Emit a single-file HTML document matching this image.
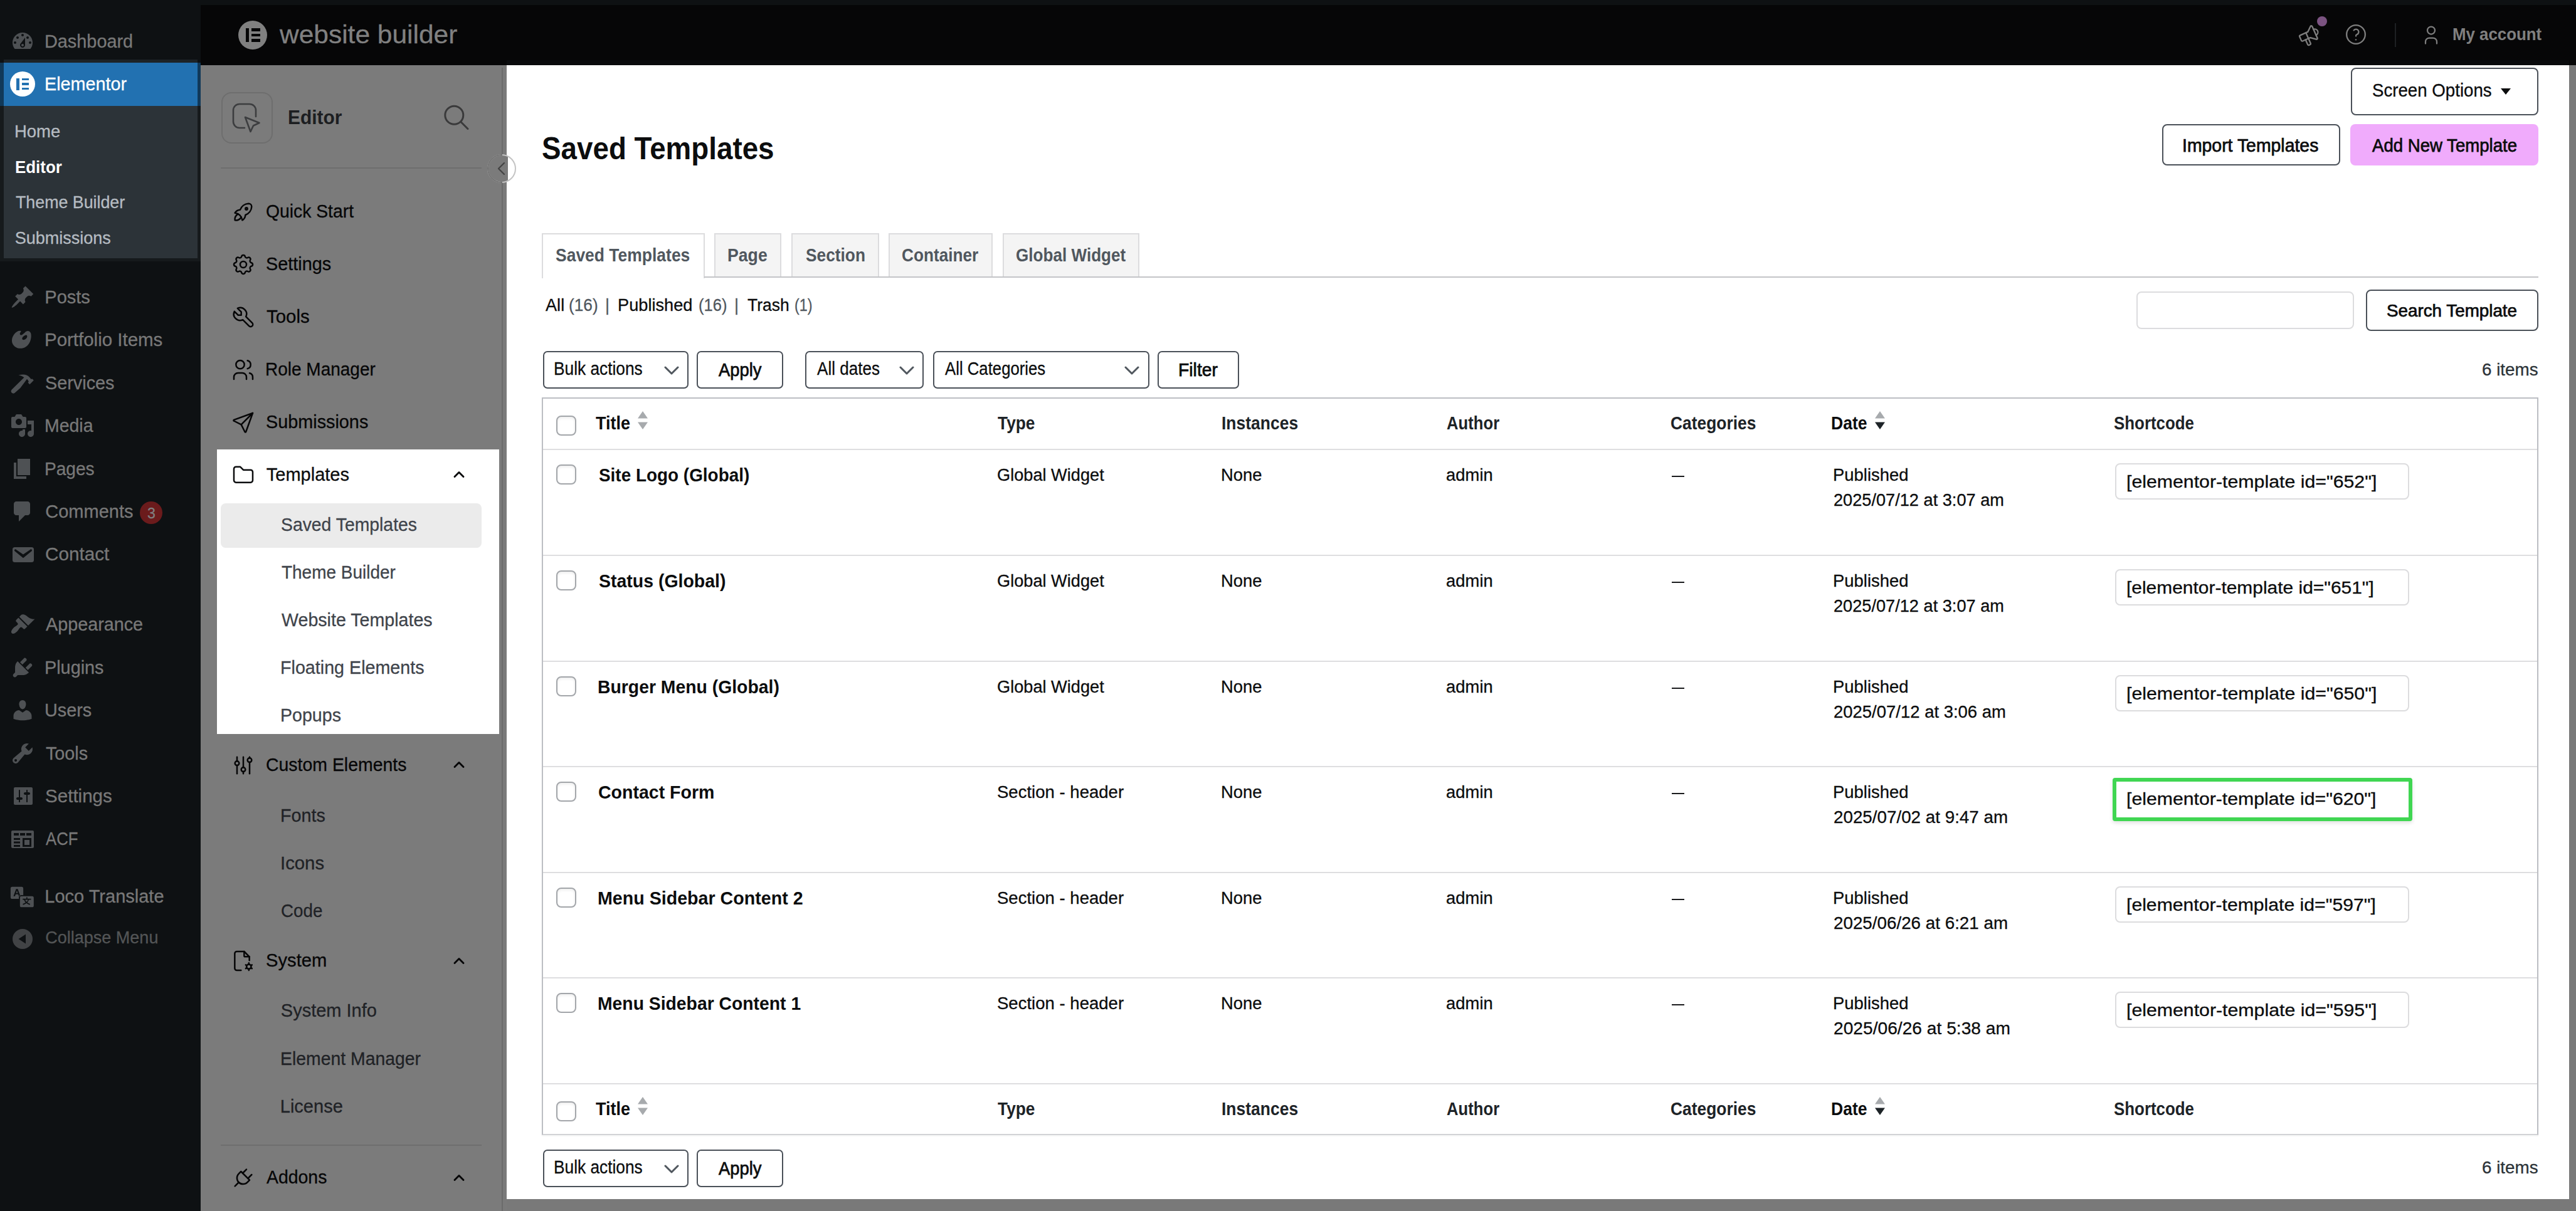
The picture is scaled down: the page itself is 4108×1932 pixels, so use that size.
<!DOCTYPE html>
<html><head><meta charset="utf-8"><title>Saved Templates</title>
<style>
html,body{margin:0;padding:0;}
body{width:4108px;height:1932px;overflow:hidden;position:relative;background:#797979;font-family:"Liberation Sans", sans-serif;}
div,span,svg{position:absolute;box-sizing:border-box;}
span{white-space:pre;-webkit-text-stroke:0.3px currentColor;transform-origin:0 50%;}
span.b{-webkit-text-stroke:0;}
span.m{-webkit-text-stroke:0.75px currentColor;}
</style></head><body>
<div style="left:0px;top:0px;width:4108px;height:1932px;background:#797979;"></div>
<div style="left:0px;top:0px;width:320px;height:1932px;background:#0e1113;"></div>
<div style="left:0px;top:0px;width:4108px;height:8px;background:#0e1113;"></div>
<div style="left:320px;top:8px;width:3788px;height:96px;background:#060607;"></div>
<div style="left:320px;top:104px;width:481px;height:1828px;background:#7b7b7b;"></div>
<div style="left:800px;top:108px;width:2px;height:1824px;background:#6b6b6b;"></div>
<div style="left:802px;top:104px;width:6px;height:1828px;background:#7a7a7a;"></div>
<div style="left:808px;top:104px;width:3289px;height:1808.7px;background:#fff;"></div>
<div style="left:808px;top:96px;width:3289px;height:8px;background:#0a0b0d;"></div>
<div style="left:0px;top:100px;width:320px;height:69px;background:#113959;"></div>
<div style="left:0px;top:169px;width:320px;height:248px;background:#161a1c;"></div>
<div style="left:6px;top:95px;width:309px;height:5px;background:#1d2327;"></div>
<div style="left:6px;top:100px;width:309px;height:69px;background:#2271b1;"></div>
<div style="left:6px;top:169px;width:309px;height:243px;background:#2c3338;"></div>
<div style="left:223.4px;top:799.9px;width:36px;height:36px;background:#6b1b1c;border-radius:18px;"></div>
<div style="left:380px;top:33px;width:46px;height:46px;border-radius:23px;background:#808080;"></div>
<div style="left:391.5px;top:45px;width:5px;height:22px;background:#060607;"></div>
<div style="left:401px;top:45px;width:14px;height:4.6px;background:#060607;"></div>
<div style="left:401px;top:53.7px;width:14px;height:4.6px;background:#060607;"></div>
<div style="left:401px;top:62.4px;width:14px;height:4.6px;background:#060607;"></div>
<div style="left:3819px;top:37px;width:2px;height:38px;background:#1e2023;"></div>
<svg style="left:3662.8px;top:37px;" width="40" height="40" viewBox="0 0 24 24"><g transform="rotate(-24 12 12)" fill="none" stroke="#7e7e7e" stroke-width="1.4" stroke-linecap="round" stroke-linejoin="round"><path d="M18 8a3 3 0 0 1 0 6"/><path d="M10 8v11a1 1 0 0 1 -1 1h-1a1 1 0 0 1 -1 -1v-5"/><path d="M12 8l4.524 -3.77a.9 .9 0 0 1 1.476 .692v12.156a.9 .9 0 0 1 -1.476 .692l-4.524 -3.77h-8a1 1 0 0 1 -1 -1v-4a1 1 0 0 1 1 -1h8"/></g></svg>
<div style="left:3694.8px;top:25.8px;width:16.4px;height:16.4px;border-radius:9px;background:#7b5381;"></div>
<svg style="left:3736.5px;top:35.3px;" width="40" height="40" viewBox="0 0 24 24"><g fill="none" stroke="#7e7e7e" stroke-width="1.4" stroke-linecap="round" stroke-linejoin="round"><circle cx="12" cy="12" r="8.9"/><path d="M12 17l0 .01"/><path d="M12 13.5a1.5 1.5 0 0 1 1 -1.5a2.6 2.6 0 1 0 -3 -4"/></g></svg>
<svg style="left:3859px;top:37.9px;" width="36" height="36" viewBox="0 0 24 24"><g fill="none" stroke="#7e7e7e" stroke-width="1.5" stroke-linecap="round" stroke-linejoin="round"><circle cx="12" cy="7" r="4"/><path d="M6 21v-2a4 4 0 0 1 4 -4h4a4 4 0 0 1 4 4v2"/></g></svg>
<div style="left:353px;top:147px;width:82px;height:82px;border:2px solid #6e6e6e;border-radius:16px;"></div>
<div style="left:352px;top:267px;width:416px;height:2px;background:#6e6e6e;"></div>
<div style="left:345.5px;top:717px;width:450.7px;height:453.5px;background:#fff;"></div>
<div style="left:352px;top:802.5px;width:416px;height:71px;background:#ebebeb;border-radius:8px;"></div>
<div style="left:352px;top:1826px;width:416px;height:2px;background:#6e6e6e;"></div>
<div style="left:3749px;top:108px;width:299px;height:75.5px;background:#fff;border:2px solid #4a5058;border-radius:8px;"></div>
<svg style="left:3988px;top:140.5px;" width="16" height="10" viewBox="0 0 16 10"><path d="M0 0h16l-8 10z" fill="#0c0d0e"/></svg>
<div style="left:3447.5px;top:198px;width:284px;height:65.5px;background:#fff;border:2px solid #4a5058;border-radius:8px;"></div>
<div style="left:3748px;top:198px;width:300px;height:65.5px;background:#f0abfc;border-radius:8px;"></div>
<div style="left:864px;top:372px;width:259.5px;height:71.5px;background:#fff;border:2px solid #dcdcde;border-bottom:none;"></div>
<div style="left:1139.3px;top:372px;width:107.0px;height:70px;background:#f4f4f4;border:2px solid #dcdcde;border-bottom:none;"></div>
<div style="left:1261.9px;top:372px;width:139.69999999999982px;height:70px;background:#f4f4f4;border:2px solid #dcdcde;border-bottom:none;"></div>
<div style="left:1417.2px;top:372px;width:165.89999999999986px;height:70px;background:#f4f4f4;border:2px solid #dcdcde;border-bottom:none;"></div>
<div style="left:1599.4px;top:372px;width:217.5px;height:70px;background:#f4f4f4;border:2px solid #dcdcde;border-bottom:none;"></div>
<div style="left:1122.5px;top:441.3px;width:2925.5px;height:2px;background:#c3c4c7;"></div>
<div style="left:3407.4px;top:465px;width:347px;height:59.5px;background:#fff;border:2px solid #dcdcde;border-radius:8px;"></div>
<div style="left:3773px;top:462px;width:275px;height:65.5px;background:#fff;border:2px solid #4a5058;border-radius:8px;"></div>
<div style="left:866px;top:560.0px;width:232.4000000000001px;height:59.89999999999998px;background:#fff;border:2px solid #4a5058;border-radius:7px;"></div>
<svg style="left:1058.9px;top:582.5px;" width="24" height="16" viewBox="0 0 24 16"><path d="M2 3 L12 13 L22 3" fill="none" stroke="#50575e" stroke-width="3" stroke-linecap="round" stroke-linejoin="round"/></svg>
<div style="left:1111px;top:560.0px;width:137.9000000000001px;height:59.89999999999998px;background:#fff;border:2px solid #4a5058;border-radius:7px;"></div>
<div style="left:866px;top:1834.0px;width:232.4000000000001px;height:59.90000000000009px;background:#fff;border:2px solid #4a5058;border-radius:7px;"></div>
<svg style="left:1058.9px;top:1856.5px;" width="24" height="16" viewBox="0 0 24 16"><path d="M2 3 L12 13 L22 3" fill="none" stroke="#50575e" stroke-width="3" stroke-linecap="round" stroke-linejoin="round"/></svg>
<div style="left:1111px;top:1834.0px;width:137.9000000000001px;height:59.90000000000009px;background:#fff;border:2px solid #4a5058;border-radius:7px;"></div>
<div style="left:1284px;top:560.0px;width:188.5px;height:59.89999999999998px;background:#fff;border:2px solid #4a5058;border-radius:7px;"></div>
<svg style="left:1433.7px;top:582.5px;" width="24" height="16" viewBox="0 0 24 16"><path d="M2 3 L12 13 L22 3" fill="none" stroke="#50575e" stroke-width="3" stroke-linecap="round" stroke-linejoin="round"/></svg>
<div style="left:1488px;top:560.0px;width:345.10000000000014px;height:59.89999999999998px;background:#fff;border:2px solid #4a5058;border-radius:7px;"></div>
<svg style="left:1793.4px;top:582.5px;" width="24" height="16" viewBox="0 0 24 16"><path d="M2 3 L12 13 L22 3" fill="none" stroke="#50575e" stroke-width="3" stroke-linecap="round" stroke-linejoin="round"/></svg>
<div style="left:1846px;top:560.0px;width:130.39999999999986px;height:59.89999999999998px;background:#fff;border:2px solid #4a5058;border-radius:7px;"></div>
<div style="left:864px;top:634px;width:3184px;height:1177px;background:#fff;border:2px solid #bcbec3;border-bottom-color:#d2d3d6;box-shadow:0 2px 2px rgba(0,0,0,.04);"></div>
<div style="left:866px;top:716px;width:3180px;height:2px;background:#dedee0;"></div>
<div style="left:866px;top:885px;width:3180px;height:2px;background:#dedee0;"></div>
<div style="left:866px;top:1054px;width:3180px;height:2px;background:#dedee0;"></div>
<div style="left:866px;top:1222px;width:3180px;height:2px;background:#dedee0;"></div>
<div style="left:866px;top:1391px;width:3180px;height:2px;background:#dedee0;"></div>
<div style="left:866px;top:1559px;width:3180px;height:2px;background:#dedee0;"></div>
<div style="left:866px;top:1728px;width:3180px;height:2px;background:#dedee0;"></div>
<div style="left:887.2px;top:663.2px;width:31.5px;height:31.5px;background:#fff;border:2px solid #a3a6aa;border-radius:8px;box-shadow:inset 0 2px 4px rgba(0,0,0,.08);"></div>
<svg style="left:1017.0999999999999px;top:656.4px;" width="16" height="30" viewBox="0 0 16 30"><path d="M8 0 L16 11.5 L0 11.5 Z" fill="#a7aaad"/><path d="M0 17.5 L16 17.5 L8 29 Z" fill="#a7aaad"/></svg>
<svg style="left:2990.1px;top:656.4px;" width="16" height="30" viewBox="0 0 16 30"><path d="M8 0 L16 11.5 L0 11.5 Z" fill="#a7aaad"/><path d="M0 17.5 L16 17.5 L8 29 Z" fill="#1d2327"/></svg>
<div style="left:887.2px;top:1757.3px;width:31.5px;height:31.5px;background:#fff;border:2px solid #a3a6aa;border-radius:8px;box-shadow:inset 0 2px 4px rgba(0,0,0,.08);"></div>
<svg style="left:1017.0999999999999px;top:1750.3px;" width="16" height="30" viewBox="0 0 16 30"><path d="M8 0 L16 11.5 L0 11.5 Z" fill="#a7aaad"/><path d="M0 17.5 L16 17.5 L8 29 Z" fill="#a7aaad"/></svg>
<svg style="left:2990.1px;top:1750.3px;" width="16" height="30" viewBox="0 0 16 30"><path d="M8 0 L16 11.5 L0 11.5 Z" fill="#a7aaad"/><path d="M0 17.5 L16 17.5 L8 29 Z" fill="#1d2327"/></svg>
<div style="left:887.2px;top:741.3px;width:31.5px;height:31.5px;background:#fff;border:2px solid #a3a6aa;border-radius:8px;box-shadow:inset 0 2px 4px rgba(0,0,0,.08);"></div>
<div style="left:2665.5px;top:758.5px;width:20.5px;height:2px;background:#1a1b1d;"></div>
<div style="left:3372.7px;top:738.7px;width:469px;height:58.4px;background:#fff;border:2px solid #dcdcde;border-radius:8px;"></div>
<div style="left:887.2px;top:910.3px;width:31.5px;height:31.5px;background:#fff;border:2px solid #a3a6aa;border-radius:8px;box-shadow:inset 0 2px 4px rgba(0,0,0,.08);"></div>
<div style="left:2665.5px;top:927.5px;width:20.5px;height:2px;background:#1a1b1d;"></div>
<div style="left:3372.7px;top:907.7px;width:469px;height:58.4px;background:#fff;border:2px solid #dcdcde;border-radius:8px;"></div>
<div style="left:887.2px;top:1079.3px;width:31.5px;height:31.5px;background:#fff;border:2px solid #a3a6aa;border-radius:8px;box-shadow:inset 0 2px 4px rgba(0,0,0,.08);"></div>
<div style="left:2665.5px;top:1096.5px;width:20.5px;height:2px;background:#1a1b1d;"></div>
<div style="left:3372.7px;top:1076.7px;width:469px;height:58.4px;background:#fff;border:2px solid #dcdcde;border-radius:8px;"></div>
<div style="left:887.2px;top:1247.3px;width:31.5px;height:31.5px;background:#fff;border:2px solid #a3a6aa;border-radius:8px;box-shadow:inset 0 2px 4px rgba(0,0,0,.08);"></div>
<div style="left:2665.5px;top:1264.5px;width:20.5px;height:2px;background:#1a1b1d;"></div>
<div style="left:3368.5px;top:1241px;width:478px;height:69px;background:#fff;border:6px solid #40d652;border-radius:4px;box-shadow:0 3px 6px rgba(0,0,0,.12);"></div>
<div style="left:887.2px;top:1416.3px;width:31.5px;height:31.5px;background:#fff;border:2px solid #a3a6aa;border-radius:8px;box-shadow:inset 0 2px 4px rgba(0,0,0,.08);"></div>
<div style="left:2665.5px;top:1433.5px;width:20.5px;height:2px;background:#1a1b1d;"></div>
<div style="left:3372.7px;top:1413.7px;width:469px;height:58.4px;background:#fff;border:2px solid #dcdcde;border-radius:8px;"></div>
<div style="left:887.2px;top:1584.3px;width:31.5px;height:31.5px;background:#fff;border:2px solid #a3a6aa;border-radius:8px;box-shadow:inset 0 2px 4px rgba(0,0,0,.08);"></div>
<div style="left:2665.5px;top:1601.5px;width:20.5px;height:2px;background:#1a1b1d;"></div>
<div style="left:3372.7px;top:1581.7px;width:469px;height:58.4px;background:#fff;border:2px solid #dcdcde;border-radius:8px;"></div>
<svg style="left:368.0px;top:318.0px;" width="40" height="40" viewBox="0 0 24 24"><g fill="none" stroke="#060607" stroke-width="1.5" stroke-linecap="round" stroke-linejoin="round"><path d="M4 13a8 8 0 0 1 7 7a6 6 0 0 0 3 -5a9 9 0 0 0 6 -8a3 3 0 0 0 -3 -3a9 9 0 0 0 -8 6a6 6 0 0 0 -5 3"/><path d="M7 14a6 6 0 0 0 -3 6a6 6 0 0 0 6 -3"/><circle cx="15" cy="9" r="1"/></g></svg>
<svg style="left:368.0px;top:401.8px;" width="40" height="40" viewBox="0 0 24 24"><g fill="none" stroke="#060607" stroke-width="1.5" stroke-linecap="round" stroke-linejoin="round"><path d="M10.325 4.317c.426 -1.756 2.924 -1.756 3.35 0a1.724 1.724 0 0 0 2.573 1.066c1.543 -.94 3.31 .826 2.37 2.37a1.724 1.724 0 0 0 1.065 2.572c1.756 .426 1.756 2.924 0 3.35a1.724 1.724 0 0 0 -1.066 2.573c.94 1.543 -.826 3.31 -2.37 2.37a1.724 1.724 0 0 0 -2.572 1.065c-.426 1.756 -2.924 1.756 -3.35 0a1.724 1.724 0 0 0 -2.573 -1.066c-1.543 .94 -3.31 -.826 -2.37 -2.37a1.724 1.724 0 0 0 -1.065 -2.572c-1.756 -.426 -1.756 -2.924 0 -3.35a1.724 1.724 0 0 0 1.066 -2.573c-.94 -1.543 .826 -3.31 2.37 -2.37c1 .608 2.296 .07 2.572 -1.065z"/><circle cx="12" cy="12" r="3"/></g></svg>
<svg style="left:368.0px;top:485.79999999999995px;" width="40" height="40" viewBox="0 0 24 24"><g fill="none" stroke="#060607" stroke-width="1.5" stroke-linecap="round" stroke-linejoin="round"><path d="M7 10h3v-3l-3.5 -3.5a6 6 0 0 1 8 8l6 6a2 2 0 0 1 -3 3l-6 -6a6 6 0 0 1 -8 -8l3.5 3.5"/></g></svg>
<svg style="left:368.0px;top:569.8px;" width="40" height="40" viewBox="0 0 24 24"><g fill="none" stroke="#060607" stroke-width="1.5" stroke-linecap="round" stroke-linejoin="round"><circle cx="9" cy="7" r="4"/><path d="M3 21v-2a4 4 0 0 1 4 -4h4a4 4 0 0 1 4 4v2"/><path d="M16 3.13a4 4 0 0 1 0 7.75"/><path d="M21 21v-2a4 4 0 0 0 -3 -3.85"/></g></svg>
<svg style="left:368.0px;top:653.8px;" width="40" height="40" viewBox="0 0 24 24"><g fill="none" stroke="#060607" stroke-width="1.5" stroke-linecap="round" stroke-linejoin="round"><path d="M10 14l11 -11"/><path d="M21 3l-6.5 18a.55 .55 0 0 1 -1 0l-3.5 -7l-7 -3.5a.55 .55 0 0 1 0 -1l18 -6.5"/></g></svg>
<svg style="left:368.0px;top:737.6px;" width="40" height="40" viewBox="0 0 24 24"><g fill="none" stroke="#0c0d0e" stroke-width="1.5" stroke-linecap="round" stroke-linejoin="round"><path d="M5 4h4l3 3h7a2 2 0 0 1 2 2v8a2 2 0 0 1 -2 2h-14a2 2 0 0 1 -2 -2v-11a2 2 0 0 1 2 -2"/></g></svg>
<svg style="left:368.0px;top:1200.6px;" width="40" height="40" viewBox="0 0 24 24"><g fill="none" stroke="#060607" stroke-width="1.5" stroke-linecap="round" stroke-linejoin="round"><circle cx="6" cy="10" r="2"/><path d="M6 4v4"/><path d="M6 12v8"/><circle cx="12" cy="16" r="2"/><path d="M12 4v10"/><path d="M12 18v2"/><circle cx="18" cy="7" r="2"/><path d="M18 4v1"/><path d="M18 9v11"/></g></svg>
<svg style="left:366.0px;top:1513.3px;" width="40" height="40" viewBox="0 0 24 24"><g fill="none" stroke="#060607" stroke-width="1.5" stroke-linecap="round" stroke-linejoin="round"><path d="M14 3v4a1 1 0 0 0 1 1h4"/><path d="M11 21h-4a2 2 0 0 1 -2 -2v-14a2 2 0 0 1 2 -2h7l5 5v3.5"/><circle cx="18.5" cy="17.5" r="2.2"/><path d="M18.5 14v1.3M18.5 19.7v1.3M21.5 15.8l-1.1 .65M16.6 18.6l-1.1 .65M15.5 15.8l1.1 .65M20.4 18.6l1.1 .65"/></g></svg>
<svg style="left:368.0px;top:1859.2px;" width="40" height="40" viewBox="0 0 24 24"><g fill="none" stroke="#060607" stroke-width="1.5" stroke-linecap="round" stroke-linejoin="round"><path d="M9.785 6l8.215 8.215l-2.054 2.054a5.81 5.81 0 1 1 -8.215 -8.215l2.054 -2.054z"/><path d="M4 20l3.5 -3.5"/><path d="M15 4l-3.500 3.500"/><path d="M20 9l-3.500 3.500"/></g></svg>
<svg style="left:717.7px;top:743.1px;" width="28" height="28" viewBox="0 0 24 24"><g fill="none" stroke="#0c0d0e" stroke-width="2.5" stroke-linecap="round" stroke-linejoin="round"><path d="M6 15l6 -6l6 6"/></g></svg>
<svg style="left:717.7px;top:1206.1px;" width="28" height="28" viewBox="0 0 24 24"><g fill="none" stroke="#060607" stroke-width="2.5" stroke-linecap="round" stroke-linejoin="round"><path d="M6 15l6 -6l6 6"/></g></svg>
<svg style="left:717.7px;top:1518.8px;" width="28" height="28" viewBox="0 0 24 24"><g fill="none" stroke="#060607" stroke-width="2.5" stroke-linecap="round" stroke-linejoin="round"><path d="M6 15l6 -6l6 6"/></g></svg>
<svg style="left:717.7px;top:1864.7px;" width="28" height="28" viewBox="0 0 24 24"><g fill="none" stroke="#060607" stroke-width="2.5" stroke-linecap="round" stroke-linejoin="round"><path d="M6 15l6 -6l6 6"/></g></svg>
<svg style="left:704px;top:163px;" width="48" height="48" viewBox="0 0 48 48"><g fill="none" stroke="#3a3a3b" stroke-width="3" stroke-linecap="round"><circle cx="20.3" cy="20.7" r="14.5"/><path d="M31 31.5l11 11"/></g></svg>
<svg style="left:366px;top:160px;" width="56" height="56" viewBox="0 0 56 56"><g fill="none" stroke="#3c3d3f" stroke-width="2.6" stroke-linejoin="round" stroke-linecap="round"><path d="M24 44h-8a10 10 0 0 1 -10 -10v-18a10 10 0 0 1 10 -10h16a10 10 0 0 1 10 10v10"/><path d="M25 27l8.500 23l4.500 -9.500l9.500 -4.500z" fill="#7b7b7b"/></g></svg>
<div style="left:777px;top:245.5px;width:46px;height:46px;border-radius:23px;border:2px solid #c4c4c4;background:linear-gradient(90deg,#7b7b7b 0,#7b7b7b 24px,#7a7a7a 24px,#7a7a7a 31px,#fff 31px);"></div>
<div style="left:777px;top:245.5px;width:24px;height:46px;border-radius:23px 0 0 23px;border:2px solid #727272;border-right:none;"></div>
<svg style="left:790px;top:257px;" width="20" height="24" viewBox="0 0 20 24"><path d="M14 3l-9 9l9 9" fill="none" stroke="#444" stroke-width="2.4" stroke-linecap="round" stroke-linejoin="round"/></svg>
<svg style="left:16.0px;top:45.7px;" width="40" height="40" viewBox="0 0 20 20"><path fill="#4e5154" fill-rule="evenodd" d="M3.76 16h12.48c1.1-1.37 1.76-3.11 1.76-5 0-4.42-3.58-8-8-8s-8 3.58-8 8c0 1.89.66 3.63 1.76 5zM10 4c.55 0 1 .45 1 1s-.45 1-1 1-1-.45-1-1 .45-1 1-1zM6 6c.55 0 1 .45 1 1s-.45 1-1 1-1-.45-1-1 .45-1 1-1zm8 0c.55 0 1 .45 1 1s-.45 1-1 1-1-.45-1-1 .45-1 1-1zm-5.37 5.55L12 7v6c0 1.1-.9 2-2 2s-2-.9-2-2c0-.57.24-1.08.63-1.45zM4 10c.55 0 1 .45 1 1s-.45 1-1 1-1-.45-1-1 .45-1 1-1zm12 0c.55 0 1 .45 1 1s-.45 1-1 1-1-.45-1-1 .45-1 1-1zm-5 3c0-.55-.45-1-1-1s-1 .45-1 1 .45 1 1 1 1-.45 1-1z"/></svg>
<svg style="left:16.0px;top:453.7px;" width="40" height="40" viewBox="0 0 20 20"><path fill="#4e5154" fill-rule="evenodd" d="M10.44 3.02l1.82-1.82 6.36 6.35-1.83 1.82c-1.05-.68-2.48-.57-3.41.36l-.75.75c-.92.93-1.04 2.35-.35 3.41l-1.83 1.82-2.41-2.41-2.8 2.79c-.42.42-3.38 2.71-3.8 2.29s1.86-3.39 2.28-3.81l2.79-2.79L4.1 9.36l1.83-1.82c1.05.69 2.48.57 3.4-.36l.75-.75c.93-.92 1.05-2.35.36-3.41z"/></svg>
<svg style="left:16.0px;top:522.2px;" width="40" height="40" viewBox="0 0 20 20"><path fill="#4e5154" fill-rule="evenodd" d="M8.55 3.06c1.01.34-1.95 2.01-.1 3.13 1.04.63 3.31-2.22 4.45-2.86.97-.54 2.67-.65 3.53 1.23 1.09 2.38.14 8.57-3.79 11.06-3.97 2.5-8.97 1.23-10.7-2.66-2.01-4.53 3.12-11.09 6.61-9.9zm1.21 6.45c.73 1.64 4.7-.5 3.79-2.8-.59-1.49-4.48 1.25-3.79 2.8z"/></svg>
<svg style="left:16.0px;top:590.7px;" width="40" height="40" viewBox="0 0 20 20"><path fill="#4e5154" fill-rule="evenodd" d="M6.7 3.8C9 3.1 11.5 3 13.2 3.7C15 4.5 16 5.8 16.8 7L17.6 6.6L18.9 7.9L15.700 11.100L14.300 9.800L14.900 8.900C14.500 8 14 7.300 13.500 6.900L8.200 14L3.800 17.900C3 18.600 1.900 18.500 1.300 17.800C.6 17 .7 16 1.400 15.300L11.200 5.600C9.800 4.600 8.300 4.100 6.700 3.800Z"/></svg>
<svg style="left:16.0px;top:659.2px;" width="40" height="40" viewBox="0 0 20 20"><path fill="#4e5154" fill-rule="evenodd" d="M13 11V4c0-.55-.45-1-1-1h-1.67L9 1H5L3.67 3H2c-.55 0-1 .45-1 1v7c0 .55.45 1 1 1h10c.55 0 1-.45 1-1zM7 4.5c1.38 0 2.5 1.12 2.5 2.5S8.38 9.5 7 9.5 4.5 8.38 4.5 7 5.62 4.5 7 4.5zM14 6h5v10.5c0 1.38-1.12 2.5-2.5 2.5S14 17.88 14 16.5s1.12-2.5 2.5-2.5c.17 0 .34.02.5.05V9h-3V6zm-4 8.05V13h2v3.5c0 1.38-1.12 2.5-2.5 2.5S7 17.88 7 16.5 8.12 14 9.5 14c.17 0 .34.02.5.05z"/></svg>
<svg style="left:16.0px;top:727.7px;" width="40" height="40" viewBox="0 0 20 20"><path fill="#4e5154" fill-rule="evenodd" d="M6 15V2h10v13H6zm-1 1h8v2H3V5h2v11z"/></svg>
<svg style="left:16.0px;top:795.7px;" width="40" height="40" viewBox="0 0 20 20"><path fill="#4e5154" fill-rule="evenodd" d="M5 2h9c1.1 0 2 .9 2 2v7c0 1.1-.9 2-2 2h-2l-5 5v-5H5c-1.1 0-2-.9-2-2V4c0-1.1.9-2 2-2z"/></svg>
<svg style="left:16.0px;top:864.7px;" width="40" height="40" viewBox="0 0 20 20"><path fill="#4e5154" fill-rule="evenodd" d="M3.87 4h13.25C18.37 4 19 4.59 19 5.79v8.42c0 1.19-.63 1.79-1.88 1.79H3.87c-1.25 0-1.88-.6-1.88-1.79V5.79c0-1.2.63-1.79 1.88-1.79zm6.62 8.6l6.74-5.53c.24-.2.43-.66.13-1.07-.29-.41-.82-.42-1.17-.17l-5.7 3.86L4.8 5.83c-.35-.25-.88-.24-1.17.17-.3.41-.11.87.13 1.07z"/></svg>
<svg style="left:16.0px;top:976.2px;" width="40" height="40" viewBox="0 0 20 20"><path fill="#4e5154" fill-rule="evenodd" d="M14.48 11.06L7.41 3.99l1.5-1.5c.5-.56 2.3-.47 3.51.32 1.21.8 1.43 1.28 2.91 2.1 1.18.64 2.45 1.26 4.45.85zm-.71.71L6.7 4.7 4.93 6.47c-.39.39-.39 1.02 0 1.41l1.06 1.06c.39.39.39 1.03 0 1.42-.6.6-1.43 1.11-2.21 1.69-.35.26-.7.53-1.01.84C1.43 14.23.4 16.08 1.4 17.07c.99 1 2.84-.03 4.18-1.36.31-.31.58-.66.85-1.01.57-.78 1.08-1.61 1.69-2.21.39-.39 1.02-.39 1.41 0l1.06 1.06c.39.39 1.02.39 1.41 0z"/></svg>
<svg style="left:16.0px;top:1044.7px;" width="40" height="40" viewBox="0 0 20 20"><path fill="#4e5154" fill-rule="evenodd" d="M13.11 4.36L9.87 7.6 8 5.73l3.24-3.24c.35-.34 1.05-.2 1.56.32.52.51.66 1.21.31 1.55zm-8 1.77l.91-1.12 9.01 9.01-1.19.84c-.71.71-2.63 1.16-3.82 1.16H6.14L4.9 17.26c-.59.59-1.54.59-2.12 0-.59-.58-.59-1.53 0-2.12l1.24-1.24v-3.88c0-1.13.4-3.19 1.09-3.89zm7.26 3.97l3.24-3.24c.34-.35 1.04-.21 1.55.31.52.51.66 1.21.31 1.55l-3.24 3.25z"/></svg>
<svg style="left:16.0px;top:1113.2px;" width="40" height="40" viewBox="0 0 20 20"><path fill="#4e5154" fill-rule="evenodd" d="M10 9.25c-2.27 0-2.73-3.44-2.73-3.44C7 4.02 7.82 2 9.97 2c2.16 0 2.98 2.02 2.71 3.81 0 0-.41 3.44-2.68 3.44zm0 2.57L12.72 10c2.39 0 4.52 2.33 4.52 4.53v2.49s-3.65 1.13-7.24 1.13c-3.65 0-7.24-1.13-7.24-1.13v-2.49c0-2.25 1.94-4.48 4.47-4.48z"/></svg>
<svg style="left:16.0px;top:1181.7px;" width="40" height="40" viewBox="0 0 20 20"><path fill="#4e5154" fill-rule="evenodd" d="M16.68 9.77c-1.34 1.34-3.3 1.67-4.95.99l-5.41 6.52c-.99.99-2.59.99-3.58 0s-.99-2.59 0-3.57l6.52-5.42c-.68-1.65-.35-3.61.99-4.95 1.28-1.28 3.12-1.62 4.72-1.06l-2.89 2.89 2.82 2.82 2.86-2.87c.53 1.58.18 3.39-1.08 4.65zM3.81 16.21c.4.39 1.04.39 1.43 0 .4-.4.4-1.04 0-1.43-.39-.4-1.03-.4-1.43 0-.39.39-.39 1.03 0 1.43z"/></svg>
<svg style="left:16.0px;top:1250.2px;" width="40" height="40" viewBox="0 0 20 20"><path fill="#4e5154" fill-rule="evenodd" d="M18 16V4c0-.55-.45-1-1-1H4c-.55 0-1 .45-1 1v12c0 .55.45 1 1 1h13c.55 0 1-.45 1-1zM8 11h1c.55 0 1 .45 1 1s-.45 1-1 1H8v1.500c0 .28-.22.500-.5.500s-.5-.22-.5-.5V13H6c-.55 0-1-.45-1-1s.45-1 1-1h1V5.500c0-.28.22-.5.500-.5s.5.22.5.500V11zm5-2h-1c-.55 0-1-.45-1-1s.45-1 1-1h1V5.500c0-.28.22-.5.500-.5s.5.220.5.500V7h1c.55 0 1 .45 1 1s-.45 1-1 1h-1v5.500c0 .28-.22.500-.5.500s-.5-.22-.5-.5V9z"/></svg>
<svg style="left:16.0px;top:1318.7px;" width="40" height="40" viewBox="0 0 20 20"><path fill="#4e5154" fill-rule="evenodd" d="M2 3h16c.55 0 1 .45 1 1v12c0 .55-.45 1-1 1H2c-.55 0-1-.45-1-1V4c0-.55.45-1 1-1zm1 2v2h4V5H3zm5 0v2h4V5H8zm5 0v2h4V5h-4zM3 9v1.500h5V9H3zm0 2.800v1.500h5v-1.500H3zM3 14.500V16h5v-1.500H3zM10 9v7h7V9h-7zm1.500 1.500h4v4h-4v-4z"/></svg>
<svg style="left:16.0px;top:1477.5px;" width="40" height="40" viewBox="0 0 20 20"><path fill="#414345" fill-rule="evenodd" d="M10 2a8 8 0 1 0 0 16a8 8 0 0 0 0-16zM12.500 6.200v7.600L6.800 10z"/></svg>
<svg style="left:16px;top:1413.3px;" width="38.7" height="35.2" viewBox="0 0 44 40"><g fill="#4e5154"><path fill-rule="evenodd" d="M4 2h17a3 3 0 0 1 3 3v12h-4a4 4 0 0 0 -4 4v3H4a3 3 0 0 1 -3 -3V5a3 3 0 0 1 3 -3zM9 19l1.200-3.500h4.600L16 19h2.800L14 6h-3L6.200 19zM12.500 8.800l1.600 4.600h-3.200z"/><path fill-rule="evenodd" d="M21 19h19a3 3 0 0 1 3 3v14a3 3 0 0 1 -3 3H21a3 3 0 0 1 -3 -3V22a3 3 0 0 1 3 -3zM29.500 21v2.500H23v2h2.300c.6 1.900 1.600 3.500 2.900 4.900c-1.500 1.200-3.200 2-5.200 2.500l.8 2c2.300-.7 4.300-1.700 6-3.100c1.600 1.400 3.600 2.400 5.900 3.100l.8-2c-2-.5-3.700-1.300-5.100-2.500c1.300-1.400 2.300-3 2.900-4.900H38v-2h-6.500V21zM27.400 25.500h5.200c-.5 1.400-1.300 2.600-2.600 3.700c-1.100-1.100-2-2.300-2.600-3.700z"/></g></svg>
<div style="left:16px;top:114px;width:40px;height:40px;border-radius:20px;background:#fff;"></div>
<div style="left:26px;top:124.5px;width:4.5px;height:19px;background:#2271b1;"></div>
<div style="left:34.5px;top:124.5px;width:11.5px;height:3.8px;background:#2271b1;"></div>
<div style="left:34.5px;top:132.1px;width:11.5px;height:3.8px;background:#2271b1;"></div>
<div style="left:34.5px;top:139.7px;width:11.5px;height:3.8px;background:#2271b1;"></div>
<span style="left:71.31px;top:51.90px;font-size:29px;line-height:29px;color:#787878;transform:scaleX(0.9947);">Dashboard</span>
<span style="left:71.32px;top:119.70px;font-size:29px;line-height:29px;color:#fff;transform:scaleX(0.9915);">Elementor</span>
<span style="left:22.77px;top:197.00px;font-size:27px;line-height:27px;color:#b6bcc2;transform:scaleX(1.0173);">Home</span>
<span class="b" style="left:23.84px;top:253.60px;font-size:27px;line-height:27px;color:#fff;font-weight:700;transform:scaleX(0.9589);">Editor</span>
<span style="left:24.80px;top:310.30px;font-size:27px;line-height:27px;color:#b6bcc2;transform:scaleX(0.9921);">Theme Builder</span>
<span style="left:23.80px;top:367.00px;font-size:27px;line-height:27px;color:#b6bcc2;">Submissions</span>
<span style="left:71.30px;top:460.00px;font-size:29px;line-height:29px;color:#787878;">Posts</span>
<span style="left:71.27px;top:528.40px;font-size:29px;line-height:29px;color:#787878;transform:scaleX(1.0162);">Portfolio Items</span>
<span style="left:72.31px;top:596.80px;font-size:29px;line-height:29px;color:#787878;transform:scaleX(0.9936);">Services</span>
<span style="left:71.34px;top:665.20px;font-size:29px;line-height:29px;color:#787878;transform:scaleX(0.9813);">Media</span>
<span style="left:71.36px;top:733.60px;font-size:29px;line-height:29px;color:#787878;transform:scaleX(0.9683);">Pages</span>
<span style="left:72.30px;top:802.00px;font-size:29px;line-height:29px;color:#787878;">Comments</span>
<span style="left:72.28px;top:870.40px;font-size:29px;line-height:29px;color:#787878;transform:scaleX(1.0234);">Contact</span>
<span style="left:73.30px;top:982.40px;font-size:29px;line-height:29px;color:#787878;transform:scaleX(0.9918);">Appearance</span>
<span style="left:71.31px;top:1050.80px;font-size:29px;line-height:29px;color:#787878;transform:scaleX(0.9934);">Plugins</span>
<span style="left:71.31px;top:1119.20px;font-size:29px;line-height:29px;color:#787878;transform:scaleX(0.9928);">Users</span>
<span style="left:73.30px;top:1187.60px;font-size:29px;line-height:29px;color:#787878;transform:scaleX(0.9896);">Tools</span>
<span style="left:72.28px;top:1256.00px;font-size:29px;line-height:29px;color:#787878;transform:scaleX(1.0195);">Settings</span>
<span style="left:73.30px;top:1324.40px;font-size:29px;line-height:29px;color:#787878;transform:scaleX(0.8868);">ACF</span>
<span style="left:71.31px;top:1415.50px;font-size:29px;line-height:29px;color:#787878;">Loco Translate</span>
<span style="left:72.30px;top:1482.70px;font-size:27px;line-height:27px;color:#535556;">Collapse Menu</span>
<span style="left:235.36px;top:808.00px;font-size:23px;line-height:23px;color:#808080;transform:scaleX(1.0063);">3</span>
<span style="left:445.52px;top:34.40px;font-size:41.5px;line-height:41.5px;color:#808080;transform:scaleX(1.0234);">website builder</span>
<span class="b" style="left:3911.18px;top:41.40px;font-size:28px;line-height:28px;color:#808080;font-weight:700;transform:scaleX(0.9234);">My account</span>
<span class="b" style="left:459.13px;top:170.60px;font-size:32px;line-height:32px;color:#1c1e21;font-weight:700;transform:scaleX(0.9335);">Editor</span>
<span style="left:423.82px;top:323.00px;font-size:29px;line-height:29px;color:#060607;transform:scaleX(0.9763);">Quick Start</span>
<span style="left:423.81px;top:406.80px;font-size:29px;line-height:29px;color:#060607;transform:scaleX(0.9943);">Settings</span>
<span style="left:424.80px;top:490.80px;font-size:29px;line-height:29px;color:#060607;transform:scaleX(1.0134);">Tools</span>
<span style="left:422.87px;top:574.80px;font-size:29px;line-height:29px;color:#060607;transform:scaleX(0.9651);">Role Manager</span>
<span style="left:423.81px;top:658.80px;font-size:29px;line-height:29px;color:#060607;transform:scaleX(0.9933);">Submissions</span>
<span style="left:424.80px;top:742.60px;font-size:29px;line-height:29px;color:#0c0d0e;">Templates</span>
<span style="left:447.82px;top:822.90px;font-size:29px;line-height:29px;color:#3f444b;transform:scaleX(0.9776);">Saved Templates</span>
<span style="left:448.80px;top:898.90px;font-size:29px;line-height:29px;color:#3f444b;transform:scaleX(0.9639);">Theme Builder</span>
<span style="left:448.80px;top:974.90px;font-size:29px;line-height:29px;color:#3f444b;transform:scaleX(0.9866);">Website Templates</span>
<span style="left:446.82px;top:1050.90px;font-size:29px;line-height:29px;color:#3f444b;transform:scaleX(0.9891);">Floating Elements</span>
<span style="left:446.83px;top:1126.90px;font-size:29px;line-height:29px;color:#3f444b;transform:scaleX(0.9858);">Popups</span>
<span style="left:423.82px;top:1205.60px;font-size:29px;line-height:29px;color:#060607;transform:scaleX(0.9808);">Custom Elements</span>
<span style="left:446.82px;top:1286.90px;font-size:29px;line-height:29px;color:#202226;transform:scaleX(0.9896);">Fonts</span>
<span style="left:446.78px;top:1362.70px;font-size:29px;line-height:29px;color:#202226;transform:scaleX(1.0103);">Icons</span>
<span style="left:447.84px;top:1438.50px;font-size:29px;line-height:29px;color:#202226;transform:scaleX(0.9568);">Code</span>
<span style="left:423.79px;top:1518.30px;font-size:29px;line-height:29px;color:#060607;transform:scaleX(1.0063);">System</span>
<span style="left:447.80px;top:1598.40px;font-size:29px;line-height:29px;color:#202226;">System Info</span>
<span style="left:446.84px;top:1674.60px;font-size:29px;line-height:29px;color:#202226;transform:scaleX(0.9787);">Element Manager</span>
<span style="left:446.80px;top:1750.80px;font-size:29px;line-height:29px;color:#202226;">License</span>
<span style="left:424.80px;top:1864.20px;font-size:29px;line-height:29px;color:#060607;transform:scaleX(0.9800);">Addons</span>
<span class="b" style="left:864.08px;top:211.90px;font-size:50px;line-height:50px;color:#0c0d0e;font-weight:700;transform:scaleX(0.9154);">Saved Templates</span>
<span style="left:3783.05px;top:129.60px;font-size:29px;line-height:29px;color:#0c0d0e;transform:scaleX(0.9537);">Screen Options</span>
<span class="m" style="left:3480.04px;top:217.80px;font-size:29px;line-height:29px;color:#0c0d0e;transform:scaleX(0.9795);">Import Templates</span>
<span class="m" style="left:3783.00px;top:217.80px;font-size:29px;line-height:29px;color:#0c0d0e;transform:scaleX(0.9514);">Add New Template</span>
<span class="b" style="left:886.30px;top:392.80px;font-size:29px;line-height:29px;color:#50575e;font-weight:700;transform:scaleX(0.9129);">Saved Templates</span>
<span class="b" style="left:1160.38px;top:392.80px;font-size:29px;line-height:29px;color:#50575e;font-weight:700;transform:scaleX(0.9195);">Page</span>
<span class="b" style="left:1284.70px;top:392.80px;font-size:29px;line-height:29px;color:#50575e;font-weight:700;transform:scaleX(0.9065);">Section</span>
<span class="b" style="left:1438.20px;top:392.80px;font-size:29px;line-height:29px;color:#50575e;font-weight:700;transform:scaleX(0.9033);">Container</span>
<span class="b" style="left:1619.90px;top:392.80px;font-size:29px;line-height:29px;color:#50575e;font-weight:700;transform:scaleX(0.9004);">Global Widget</span>
<span style="left:870.20px;top:473.60px;font-size:27px;line-height:27px;color:#0c0d0e;transform:scaleX(1.0063);">All</span>
<span style="left:907.03px;top:473.60px;font-size:27px;line-height:27px;color:#50575e;transform:scaleX(0.9712);">(16)</span>
<span style="left:964.99px;top:473.60px;font-size:27px;line-height:27px;color:#50575e;transform:scaleX(1.0063);">|</span>
<span style="left:984.89px;top:473.60px;font-size:27px;line-height:27px;color:#0c0d0e;transform:scaleX(1.0072);">Published</span>
<span style="left:1113.55px;top:473.60px;font-size:27px;line-height:27px;color:#50575e;transform:scaleX(0.9452);">(16)</span>
<span style="left:1170.69px;top:473.60px;font-size:27px;line-height:27px;color:#50575e;transform:scaleX(1.0063);">|</span>
<span style="left:1191.80px;top:473.60px;font-size:27px;line-height:27px;color:#0c0d0e;transform:scaleX(0.9791);">Trash</span>
<span style="left:1266.94px;top:473.60px;font-size:27px;line-height:27px;color:#50575e;transform:scaleX(0.8643);">(1)</span>
<span class="m" style="left:3806.01px;top:481.50px;font-size:28px;line-height:28px;color:#0c0d0e;transform:scaleX(0.9926);">Search Template</span>
<span style="left:3957.97px;top:576.50px;font-size:27px;line-height:27px;color:#2c3338;transform:scaleX(1.0289);">6 items</span>
<span style="left:3957.97px;top:1849.60px;font-size:27px;line-height:27px;color:#2c3338;transform:scaleX(1.0289);">6 items</span>
<span style="left:883.19px;top:574.10px;font-size:29px;line-height:29px;color:#0c0d0e;transform:scaleX(0.9067);">Bulk actions</span>
<span class="m" style="left:1146.40px;top:576.10px;font-size:29px;line-height:29px;color:#0c0d0e;transform:scaleX(0.9433);">Apply</span>
<span style="left:883.19px;top:1848.10px;font-size:29px;line-height:29px;color:#0c0d0e;transform:scaleX(0.9067);">Bulk actions</span>
<span class="m" style="left:1146.40px;top:1850.10px;font-size:29px;line-height:29px;color:#0c0d0e;transform:scaleX(0.9433);">Apply</span>
<span style="left:1302.70px;top:574.10px;font-size:29px;line-height:29px;color:#0c0d0e;transform:scaleX(0.8986);">All dates</span>
<span style="left:1506.50px;top:574.10px;font-size:29px;line-height:29px;color:#0c0d0e;transform:scaleX(0.8876);">All Categories</span>
<span class="m" style="left:1879.04px;top:576.10px;font-size:29px;line-height:29px;color:#0c0d0e;transform:scaleX(0.9779);">Filter</span>
<span class="b" style="left:949.80px;top:660.80px;font-size:29px;line-height:29px;color:#0c0d0e;font-weight:700;transform:scaleX(0.9328);">Title</span>
<span class="b" style="left:1590.70px;top:660.80px;font-size:29px;line-height:29px;color:#1d2327;font-weight:700;transform:scaleX(0.9082);">Type</span>
<span class="b" style="left:1947.99px;top:660.80px;font-size:29px;line-height:29px;color:#1d2327;font-weight:700;transform:scaleX(0.9130);">Instances</span>
<span class="b" style="left:2306.60px;top:660.80px;font-size:29px;line-height:29px;color:#1d2327;font-weight:700;transform:scaleX(0.8856);">Author</span>
<span class="b" style="left:2664.29px;top:660.80px;font-size:29px;line-height:29px;color:#1d2327;font-weight:700;transform:scaleX(0.9103);">Categories</span>
<span class="b" style="left:2920.38px;top:660.80px;font-size:29px;line-height:29px;color:#0c0d0e;font-weight:700;transform:scaleX(0.9169);">Date</span>
<span class="b" style="left:3370.90px;top:660.80px;font-size:29px;line-height:29px;color:#1d2327;font-weight:700;transform:scaleX(0.8927);">Shortcode</span>
<span class="b" style="left:949.80px;top:1754.70px;font-size:29px;line-height:29px;color:#0c0d0e;font-weight:700;transform:scaleX(0.9328);">Title</span>
<span class="b" style="left:1590.70px;top:1754.70px;font-size:29px;line-height:29px;color:#1d2327;font-weight:700;transform:scaleX(0.9082);">Type</span>
<span class="b" style="left:1947.99px;top:1754.70px;font-size:29px;line-height:29px;color:#1d2327;font-weight:700;transform:scaleX(0.9130);">Instances</span>
<span class="b" style="left:2306.60px;top:1754.70px;font-size:29px;line-height:29px;color:#1d2327;font-weight:700;transform:scaleX(0.8856);">Author</span>
<span class="b" style="left:2664.29px;top:1754.70px;font-size:29px;line-height:29px;color:#1d2327;font-weight:700;transform:scaleX(0.9103);">Categories</span>
<span class="b" style="left:2920.38px;top:1754.70px;font-size:29px;line-height:29px;color:#0c0d0e;font-weight:700;transform:scaleX(0.9169);">Date</span>
<span class="b" style="left:3370.90px;top:1754.70px;font-size:29px;line-height:29px;color:#1d2327;font-weight:700;transform:scaleX(0.8927);">Shortcode</span>
<span class="b" style="left:954.50px;top:742.90px;font-size:30px;line-height:30px;color:#0c0d0e;font-weight:700;transform:scaleX(0.9300);">Site Logo (Global)</span>
<span style="left:1589.69px;top:744.70px;font-size:27px;line-height:27px;color:#0c0d0e;transform:scaleX(1.0066);">Global Widget</span>
<span style="left:1946.87px;top:744.70px;font-size:27px;line-height:27px;color:#0c0d0e;transform:scaleX(1.0158);">None</span>
<span style="left:2305.58px;top:744.70px;font-size:27px;line-height:27px;color:#0c0d0e;transform:scaleX(1.0165);">admin</span>
<span style="left:2923.37px;top:744.70px;font-size:27px;line-height:27px;color:#0c0d0e;transform:scaleX(1.0158);">Published</span>
<span style="left:2924.39px;top:784.90px;font-size:27px;line-height:27px;color:#0c0d0e;transform:scaleX(1.0063);">2025/07/12 at 3:07 am</span>
<span style="left:3391.28px;top:755.80px;font-size:27px;line-height:27px;color:#0c0d0e;transform:scaleX(1.1213);">[elementor-template id=&quot;652&quot;]</span>
<span class="b" style="left:954.50px;top:911.90px;font-size:30px;line-height:30px;color:#0c0d0e;font-weight:700;transform:scaleX(0.9489);">Status (Global)</span>
<span style="left:1589.69px;top:913.70px;font-size:27px;line-height:27px;color:#0c0d0e;transform:scaleX(1.0066);">Global Widget</span>
<span style="left:1946.87px;top:913.70px;font-size:27px;line-height:27px;color:#0c0d0e;transform:scaleX(1.0158);">None</span>
<span style="left:2305.58px;top:913.70px;font-size:27px;line-height:27px;color:#0c0d0e;transform:scaleX(1.0165);">admin</span>
<span style="left:2923.37px;top:913.70px;font-size:27px;line-height:27px;color:#0c0d0e;transform:scaleX(1.0158);">Published</span>
<span style="left:2924.39px;top:953.90px;font-size:27px;line-height:27px;color:#0c0d0e;transform:scaleX(1.0063);">2025/07/12 at 3:07 am</span>
<span style="left:3391.29px;top:924.80px;font-size:27px;line-height:27px;color:#0c0d0e;transform:scaleX(1.1086);">[elementor-template id=&quot;651&quot;]</span>
<span class="b" style="left:952.61px;top:1080.90px;font-size:30px;line-height:30px;color:#0c0d0e;font-weight:700;transform:scaleX(0.9451);">Burger Menu (Global)</span>
<span style="left:1589.69px;top:1082.70px;font-size:27px;line-height:27px;color:#0c0d0e;transform:scaleX(1.0066);">Global Widget</span>
<span style="left:1946.87px;top:1082.70px;font-size:27px;line-height:27px;color:#0c0d0e;transform:scaleX(1.0158);">None</span>
<span style="left:2305.58px;top:1082.70px;font-size:27px;line-height:27px;color:#0c0d0e;transform:scaleX(1.0165);">admin</span>
<span style="left:2923.37px;top:1082.70px;font-size:27px;line-height:27px;color:#0c0d0e;transform:scaleX(1.0158);">Published</span>
<span style="left:2924.38px;top:1122.90px;font-size:27px;line-height:27px;color:#0c0d0e;transform:scaleX(1.0175);">2025/07/12 at 3:06 am</span>
<span style="left:3391.28px;top:1093.80px;font-size:27px;line-height:27px;color:#0c0d0e;transform:scaleX(1.1213);">[elementor-template id=&quot;650&quot;]</span>
<span class="b" style="left:953.55px;top:1248.90px;font-size:30px;line-height:30px;color:#0c0d0e;font-weight:700;transform:scaleX(0.9510);">Contact Form</span>
<span style="left:1589.68px;top:1250.70px;font-size:27px;line-height:27px;color:#0c0d0e;transform:scaleX(1.0201);">Section - header</span>
<span style="left:1946.87px;top:1250.70px;font-size:27px;line-height:27px;color:#0c0d0e;transform:scaleX(1.0158);">None</span>
<span style="left:2305.58px;top:1250.70px;font-size:27px;line-height:27px;color:#0c0d0e;transform:scaleX(1.0165);">admin</span>
<span style="left:2923.37px;top:1250.70px;font-size:27px;line-height:27px;color:#0c0d0e;transform:scaleX(1.0158);">Published</span>
<span style="left:2924.37px;top:1290.90px;font-size:27px;line-height:27px;color:#0c0d0e;transform:scaleX(1.0291);">2025/07/02 at 9:47 am</span>
<span style="left:3391.28px;top:1261.80px;font-size:27px;line-height:27px;color:#0c0d0e;transform:scaleX(1.1190);">[elementor-template id=&quot;620&quot;]</span>
<span class="b" style="left:952.59px;top:1417.90px;font-size:30px;line-height:30px;color:#0c0d0e;font-weight:700;transform:scaleX(0.9540);">Menu Sidebar Content 2</span>
<span style="left:1589.68px;top:1419.70px;font-size:27px;line-height:27px;color:#0c0d0e;transform:scaleX(1.0201);">Section - header</span>
<span style="left:1946.87px;top:1419.70px;font-size:27px;line-height:27px;color:#0c0d0e;transform:scaleX(1.0158);">None</span>
<span style="left:2305.58px;top:1419.70px;font-size:27px;line-height:27px;color:#0c0d0e;transform:scaleX(1.0165);">admin</span>
<span style="left:2923.37px;top:1419.70px;font-size:27px;line-height:27px;color:#0c0d0e;transform:scaleX(1.0158);">Published</span>
<span style="left:2924.37px;top:1459.90px;font-size:27px;line-height:27px;color:#0c0d0e;transform:scaleX(1.0291);">2025/06/26 at 6:21 am</span>
<span style="left:3391.28px;top:1430.80px;font-size:27px;line-height:27px;color:#0c0d0e;transform:scaleX(1.1170);">[elementor-template id=&quot;597&quot;]</span>
<span class="b" style="left:952.61px;top:1585.90px;font-size:30px;line-height:30px;color:#0c0d0e;font-weight:700;transform:scaleX(0.9440);">Menu Sidebar Content 1</span>
<span style="left:1589.68px;top:1587.70px;font-size:27px;line-height:27px;color:#0c0d0e;transform:scaleX(1.0201);">Section - header</span>
<span style="left:1946.87px;top:1587.70px;font-size:27px;line-height:27px;color:#0c0d0e;transform:scaleX(1.0158);">None</span>
<span style="left:2305.58px;top:1587.70px;font-size:27px;line-height:27px;color:#0c0d0e;transform:scaleX(1.0165);">admin</span>
<span style="left:2923.37px;top:1587.70px;font-size:27px;line-height:27px;color:#0c0d0e;transform:scaleX(1.0158);">Published</span>
<span style="left:2924.36px;top:1627.90px;font-size:27px;line-height:27px;color:#0c0d0e;transform:scaleX(1.0436);">2025/06/26 at 5:38 am</span>
<span style="left:3391.28px;top:1598.80px;font-size:27px;line-height:27px;color:#0c0d0e;transform:scaleX(1.1213);">[elementor-template id=&quot;595&quot;]</span>
</body></html>
